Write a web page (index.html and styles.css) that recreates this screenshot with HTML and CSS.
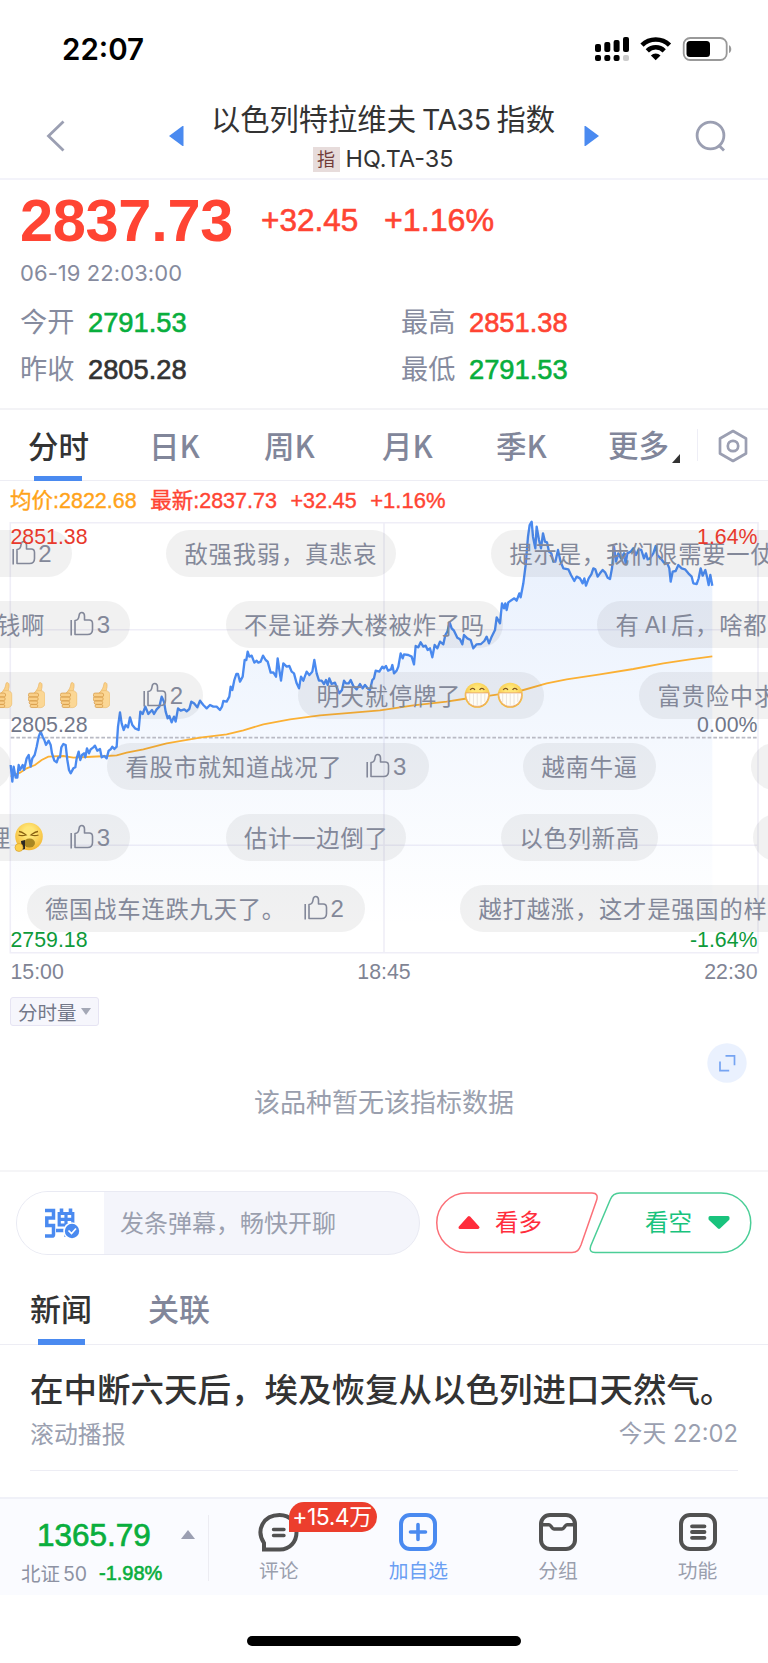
FILE: index.html
```html
<!DOCTYPE html>
<html lang="zh-CN">
<head>
<meta charset="utf-8">
<title>以色列特拉维夫TA35指数</title>
<link rel="stylesheet" href="styles.css">
</head>
<body>
<svg width="0" height="0" class="defs" aria-hidden="true">
  <defs>
    <symbol id="thumb" viewBox="0 0 24 26">
      <path d="M1.2 9v15.5M5 9.5v14h12.500c3 0 5-2 5-5v-6c0-2.200-1.200-3.500-3.300-3.500H14.500V5c0-2-1-3.500-2.700-3.500S9.300 2.600 9.100 4.500C8.800 7.500 7.500 9.500 5 9.500z" fill="none" stroke="currentColor" stroke-width="1.600" stroke-linejoin="round"/>
    </symbol>
    <symbol id="yellow-thumb" viewBox="0 0 18 28">
      <path d="M6.500 12C9 9 11 6 11.200 2.500 11.400.600 14.300.800 14.500 3.500c.2 3-.8 5-1.200 7.500z" fill="#fbd28a" stroke="#e9b25d" stroke-width=".6"/>
      <rect x="6" y="9.500" width="11.500" height="17.500" rx="4.500" fill="#fbd795" stroke="#e9b869" stroke-width=".6"/>
      <path d="M2.500 12h6.500a2 2 0 0 1 0 4H2a2 2 0 0 1 .5-4zM2 16h6.500a2 2 0 0 1 0 4H2a2 2 0 0 1 0-4zM2.500 20h6a1.900 1.900 0 0 1 0 3.700H3a1.900 1.900 0 0 1-.5-3.700zM3.500 23.700h5a1.600 1.600 0 0 1 0 3.200h-4.500a1.600 1.600 0 0 1-.5-3.200z" fill="#f9cf88" stroke="#d99e4c" stroke-width=".8"/>
    </symbol>
    <radialGradient id="face" cx=".5" cy=".35" r=".65"><stop offset=".3" stop-color="#ffe676"/><stop offset="1" stop-color="#f3b632"/></radialGradient>
    <symbol id="grin" viewBox="0 0 28 28">
      <circle cx="14" cy="14" r="13.300" fill="url(#face)"/>
      <path d="M6.500 8.500C8 6 10.500 6 11.500 8.500M16.500 8.500c1-2.500 3.500-2.500 5 0" fill="none" stroke="#7d5220" stroke-width="1.300"/>
      <path d="M2 11.500h24c.5 8-4.500 14.300-12 14.300S1.500 19.500 2 11.500z" fill="#fffdf6" stroke="#e8a26d" stroke-width=".9"/>
      <path d="M6 12v9M10 12v12M14 12v13M18 12v12M22 12v9" stroke="#d9d3cc" stroke-width=".6"/>
    </symbol>
    <symbol id="yawn" viewBox="0 0 29 30">
      <circle cx="15" cy="14.500" r="13.800" fill="url(#face)"/>
      <path d="M5 9.500c3 0 5 2 7 3.500-3 1-5 1-7.500 0M24 9.500c-3 0-5 2-7 3.500 3 1 5 1 7.500 0" fill="none" stroke="#8a6212" stroke-width="1.300"/>
      <ellipse cx="15.500" cy="21" rx="5.500" ry="4.500" fill="#a98722"/>
      <path d="M7 19l4-1v9l-3 1z" fill="#2c2823"/>
      <circle cx="5" cy="25.500" r="4" fill="#fdd04d" stroke="#d39a23" stroke-width=".6"/>
    </symbol>
  </defs>
</svg>

<header class="status">
  <span class="clock">22:07</span>
  <svg class="status-icons" width="138" height="28" viewBox="594 35 138 28">
    <g fill="#000">
      <rect x="595" y="44" width="6" height="8" rx="2"/><rect x="604.300" y="42" width="6" height="10" rx="2"/><rect x="613.600" y="40" width="6" height="12" rx="2"/><rect x="623" y="37" width="6" height="15" rx="2"/>
      <rect x="595" y="55" width="6" height="6" rx="2"/><rect x="604.300" y="55" width="6" height="6" rx="2"/><rect x="613.600" y="55" width="6" height="6" rx="2"/>
    </g>
    <rect x="623" y="55" width="6" height="6" rx="2" fill="#ccc"/>
    <path d="M642 45.200a19.500 19.500 0 0 1 27.500 0M647.300 50.800a12 12 0 0 1 16.900 0" fill="none" stroke="#000" stroke-width="4.600"/>
    <path d="M655.700 60.300l-4.800-4.900a6.800 6.800 0 0 1 9.600 0z"/>
    <rect x="683.700" y="38" width="43" height="22" rx="6.500" fill="none" stroke="#999" stroke-width="1.800"/>
    <rect x="686.500" y="41" width="23.500" height="16" rx="3.500"/>
    <path d="M729 45.200c3 1 3 6.800 0 7.800z" fill="#999"/>
  </svg>
</header>

<nav class="nav">
  <svg class="nav-back" width="20" height="32" viewBox="0 0 20 32"><path d="M17.500 1.500L2.500 16l15 14.500" fill="none" stroke="#9b9fb2" stroke-width="2.800"/></svg>
  <svg class="nav-prev" width="15" height="20" viewBox="0 0 15 20"><path d="M0 10L13.500 0h1v20h-1z" fill="#4a8af0"/></svg>
  <div class="nav-title">
    <h1>以色列特拉维夫<span class="lat">TA35</span>指数</h1>
    <p><b class="tag">指</b><span class="code">HQ.TA-35</span></p>
  </div>
  <svg class="nav-next" width="15" height="20" viewBox="0 0 15 20"><path d="M15 10L1.500 0H.500v20h1z" fill="#4a8af0"/></svg>
  <svg class="nav-search" width="32" height="32" viewBox="0 0 32 32"><g fill="none" stroke="#9b9fb2" stroke-width="2.800"><circle cx="15.500" cy="15.500" r="13.400"/><path d="M23.500 25l5.500 5.500"/></g></svg>
</nav>

<section class="quote">
  <div class="price-row"><strong class="price">2837.73</strong><span class="chg">+32.45</span><span class="pct">+1.16%</span></div>
  <time class="stamp">06-19 22:03:00</time>
  <dl class="stats">
    <div><dt>今开</dt><dd class="green">2791.53</dd></div>
    <div><dt>最高</dt><dd class="red">2851.38</dd></div>
    <div><dt>昨收</dt><dd>2805.28</dd></div>
    <div><dt>最低</dt><dd class="green">2791.53</dd></div>
  </dl>
</section>

<div class="tabs">
  <span class="tab active">分时</span>
  <span class="tab">日K</span>
  <span class="tab">周K</span>
  <span class="tab">月K</span>
  <span class="tab">季K</span>
  <span class="tab more">更多<i></i></span>
  <svg class="gear" width="32" height="34" viewBox="0 0 32 34"><g fill="none" stroke="#9b9fb2" stroke-width="2.700" stroke-linejoin="round"><path d="M16 2l13 7.500v15L16 32 3 24.500v-15z"/><circle cx="16" cy="17" r="5.200"/></g></svg>
</div>

<div class="legend"><span class="orange">均价:2822.68</span><span>最新:2837.73</span><span>+32.45</span><span class="wide">+1.16%</span></div>

<section class="chart">
  <svg width="768" height="485" viewBox="0 510 768 485">
    <defs><linearGradient id="fill" gradientUnits="userSpaceOnUse" x1="0" y1="30" x2="0" y2="1250"><stop offset="0" stop-color="#4a8af0" stop-opacity=".13"/><stop offset="1" stop-color="#4a8af0" stop-opacity="0"/></linearGradient></defs>
    <g fill="none" stroke="#efeef7" stroke-width="1.600">
      <path d="M10.300 522.700H758V952.700H10.300zM10.300 629.700H758M10.300 845.300H758M384 522.700V952.700"/>
    </g>
    <g transform="translate(0 510) scale(.33333)">
      <path id="area" fill="url(#fill)"/>
      <path d="M32 683H2274" stroke="#b9bac4" stroke-width="5" stroke-dasharray="11 6" fill="none"/>
      <polyline id="average" points="32,800 60,788 80,775 105,765 125,750 145,740 190,738 220,743 260,741 320,738 350,736 380,728 430,718 500,700 570,688 600,683 680,673 730,661 790,643 870,628 960,616 1060,608 1140,601 1240,586 1340,575 1390,567 1470,557 1560,543 1640,520 1700,508 1800,493 1900,477 1990,460 2070,448 2137,439" fill="none" stroke="#fbb034" stroke-width="5.500"/>
      <polyline id="price" fill="none" stroke="#4a8af0" stroke-width="7" stroke-linejoin="round"/>
    </g>
  </svg>
  <div class="danmaku" id="danmaku"></div>
  <svg class="labels" width="768" height="485" viewBox="0 510 768 485">
    <g font-size="21.300">
      <text x="10.500" y="543.700" fill="#e8392c">2851.38</text>
      <text x="757.500" y="543.700" fill="#e8392c" text-anchor="end">1.64%</text>
      <text x="10.500" y="732" fill="#717789">2805.28</text>
      <text x="757.500" y="732" fill="#717789" text-anchor="end">0.00%</text>
      <text x="10.500" y="947.300" fill="#0d9a3a">2759.18</text>
      <text x="757.500" y="947.300" fill="#0d9a3a" text-anchor="end">-1.64%</text>
      <g fill="#7f8494"><text x="10.500" y="978.700">15:00</text><text x="384" y="978.700" text-anchor="middle">18:45</text><text x="757.500" y="978.700" text-anchor="end">22:30</text></g>
    </g>
  </svg>
</section>

<section class="volume">
  <button class="vol-btn">分时量<i></i></button>
  <svg class="expand" width="40" height="40" viewBox="0 0 40 40"><circle cx="20" cy="20" r="19.700" fill="#eaf1fe"/><path d="M18.500 12.800h9v9.500M13 18.500v9.200h9.200" fill="none" stroke="#76a4f2" stroke-width="1.700"/></svg>
  <p class="empty">该品种暂无该指标数据</p>
</section>

<section class="compose">
  <div class="input">
    <div class="dan">
      <svg width="38" height="34" viewBox="43 1206 38 34">
        <g fill="none" stroke="#4a8af0" stroke-width="3.500">
          <path d="M45 1210.500h8.500v7.500h-6.700v7.500H53.500v9c0 1-.5 1.600-1.500 1.600h-7"/>
          <path d="M59.200 1213.500h13.600v11.500h-13.600zM59 1219.300h14M66 1213v24" stroke-width="3.200"/>
          <path d="M56 1230.500H67" stroke-width="3.400"/><path d="M61.500 1208.500v4M70.500 1208.500v4" stroke-width="3.600"/>
        </g>
        <circle cx="72" cy="1231" r="8.800" fill="#fff"/><circle cx="72" cy="1231" r="7.200" fill="#4a8af0"/>
        <path d="M68.500 1230.500l3 3 4.500-5" fill="none" stroke="#fff" stroke-width="1.700"/>
      </svg>
    </div>
    <span>发条弹幕，畅快开聊</span>
  </div>
  <div class="vote">
    <svg width="316" height="64" viewBox="0 0 316 64" fill="none" stroke-width="1.500">
      <path d="M30.500 2H156c5 0 6 3 4.500 7.500L145 54c-2 5-4 7.500-9 7.500H30.500a29.750 29.750 0 0 1 0-59.500z" stroke="#fb7078"/>
      <path d="M285 2H184c-5 0-8 2-9.700 6.500L154.700 55c-1.500 4.500 0 6.500 4.500 6.500H285a29.750 29.750 0 0 0 0-59.500z" stroke="#4bce97"/>
    </svg>
    <div class="bull"><svg width="24" height="16" viewBox="0 0 24 16"><path d="M12 2.500L21 12.500H3z" fill="#ff2d3c" stroke="#ff2d3c" stroke-width="3" stroke-linejoin="round"/></svg><span>看多</span></div>
    <div class="bear"><span>看空</span><svg width="24" height="16" viewBox="0 0 24 16"><path d="M3 2.500h18v1.500L12 12.500 3 4z" fill="#19c37d" stroke="#19c37d" stroke-width="3" stroke-linejoin="round"/></svg></div>
  </div>
</section>

<div class="news-tabs"><span class="active">新闻</span><span>关联</span></div>
<article class="news">
  <h2>在中断六天后，埃及恢复从以色列进口天然气。</h2>
  <p><span>滚动播报</span><time>今天 22:02</time></p>
</article>

<footer class="dock">
  <div class="index">
    <div class="idx-top"><strong>1365.79</strong><i></i></div>
    <div class="idx-sub"><span>北证<span class="lat50">50</span></span><b>-1.98%</b></div>
  </div>
  <div class="dock-item">
    <svg width="42" height="42" viewBox="0 0 42 42"><path d="M6 38.500V32C-2.500 19 5.500 4 21.500 4 33 4 38.500 12.500 38.500 21.500S32 38.500 22 38.500z" fill="none" stroke="#515151" stroke-width="4"/><path d="M15.500 18.500h10.500M15.500 24.500h10.500" stroke="#515151" stroke-width="3.400" stroke-linecap="round"/></svg>
    <span>评论</span><em>+15.4万</em>
  </div>
  <div class="dock-item on">
    <svg width="42" height="42" viewBox="0 0 42 42"><rect x="4" y="4" width="34" height="34" rx="9" fill="none" stroke="#4a8af0" stroke-width="4"/><path d="M21 13.500v15M13.500 21h15" stroke="#4a8af0" stroke-width="3.600" stroke-linecap="round"/></svg>
    <span>加自选</span>
  </div>
  <div class="dock-item">
    <svg width="42" height="42" viewBox="0 0 42 42"><g fill="none" stroke="#515151" stroke-width="4"><rect x="4" y="4" width="34" height="34" rx="9"/><path d="M4 13.800h8c2 0 3 4.200 5 4.200h8c2 0 3-4.200 5-4.200h8" stroke-width="3.400"/></g></svg>
    <span>分组</span>
  </div>
  <div class="dock-item">
    <svg width="42" height="42" viewBox="0 0 42 42"><rect x="4" y="4" width="34" height="34" rx="9" fill="none" stroke="#515151" stroke-width="4"/><path d="M15 15.300h12.500M15 21h12.500M15 26.800h12.500" stroke="#515151" stroke-width="3.800" stroke-linecap="round"/></svg>
    <span>功能</span>
  </div>
</footer>
<div class="home"></div>
<script src="app.js"></script>
</body>
</html>
```
FILE: styles.css
```css
* { box-sizing: border-box; margin: 0; padding: 0; }
body {
  width: 768px; height: 1663px; overflow: hidden; background: #fff; color: #333;
  font-family: "Liberation Sans", "Noto Sans CJK SC", sans-serif;
}
svg { display: block; flex: none; }
.defs { position: absolute; }
i, em { font-style: normal; }

.status { height: 98px; padding: 35px 36px 0 62px; display: flex; justify-content: space-between; }
.clock { font: 600 29.500px/28px Inter, sans-serif; color: #000; }

.nav { height: 82px; padding: 0 41px 0 46px; display: flex; border-bottom: 2px solid #f3f3fa; }
.nav-back { margin: 22px 103px 0 0; }
.nav-prev { margin-top: 28px; }
.nav-title { flex: 1; display: flex; flex-direction: column; align-items: center; padding-right: 2px; }
.nav-title h1 { font: 400 29.300px/40px "Noto Sans CJK SC", sans-serif; white-space: nowrap; margin-top: -1px; }
.nav-title .lat { font-family: Inter, sans-serif; font-size: 28.500px; letter-spacing: -.5px; margin: 0 6px; }
.nav-title p { display: flex; align-items: center; height: 26px; margin-top: 6px; }
.tag { width: 27px; height: 25px; background: #e7dcdb; color: #723b38; font: 400 18px/23px "Noto Sans CJK SC", sans-serif; text-align: center; margin-right: 6px; }
.code { font: 400 23.400px/25px Inter, sans-serif; height: 26px; }
.nav-next { margin-top: 28px; }
.nav-search { margin: 22px 0 0 96px; }

.quote { height: 230px; padding: 13px 20px 0; border-bottom: 2px solid #f3f3f6; }
.price-row { display: flex; align-items: center; height: 56px; color: #ff4433; white-space: nowrap; }
.price { font-size: 59.500px; line-height: 56px; width: 241px; letter-spacing: -.3px; }
.chg, .pct { font-size: 31.500px; line-height: 38px; height: 40px; -webkit-text-stroke: .6px; }
.chg { width: 123px; }
.pct { font-size: 32.200px; }
.stamp { display: block; font: 400 22px/24px Inter, sans-serif; letter-spacing: .07px; color: #868b9e; margin-top: 12px; }
.stats { display: grid; grid-template-columns: 381px 1fr; grid-auto-rows: 47px; margin-top: 14px; }
.stats > div { display: flex; align-items: center; }
.stats dt { font-size: 27.200px; line-height: 40px; height: 40px; color: #868b9e; width: 68px; white-space: nowrap; }
.stats dd { font-size: 27.300px; -webkit-text-stroke: .6px; }
.green { color: #09ae3d; }
.red { color: #ff4433; }

.tabs { height: 71px; display: flex; align-items: center; padding-left: 28px; color: #81869a; font-size: 30.500px; font-weight: 500; border-bottom: 1px solid #ededf4; font-family: "Noto Sans CJK SC", sans-serif; white-space: nowrap; }
.tab { position: relative; height: 71px; line-height: 70px; width: 118px; }
.tab:first-child { width: 121px; }
.tab:nth-child(2) { width: 115px; }
.tab:nth-child(3) { width: 118px; }
.tab:nth-child(4) { width: 114px; }
.tab:nth-child(5) { width: 112px; }
.active { color: #333; }
.tab.active::after { content: ""; position: absolute; left: 6px; bottom: 0; width: 48px; height: 5px; background: #4a8af0; }
.tab.more { width: 90px; height: 32px; line-height: 31px; border-right: 1.500px solid #eeeef6; }
.more i { position: absolute; left: 64px; bottom: -2px; border: solid transparent; border-width: 9px 0 0 8px; border-bottom: 9px solid #333; border-top: 0; }
.gear { margin-left: 19px; margin-top: 1px; }

.legend { height: 29px; padding-left: 10px; display: flex; gap: 13.500px; font-size: 21.500px; line-height: 41px; color: #ff4433; -webkit-text-stroke: .4px; white-space: nowrap; }
.legend .wide { font-size: 22px; line-height: 40px; }
.orange { color: #ffa31a; }

.chart { position: relative; height: 485px; overflow: hidden; }
.labels { position: absolute; left: 0; top: 0; }
.pill { position: absolute; height: 47px; border-radius: 24px; background: rgba(60, 60, 60, .07); color: #838899; display: flex; align-items: center; padding-left: 18.500px; white-space: nowrap; font: 400 23.300px/47px "Noto Sans CJK SC", sans-serif; letter-spacing: .8px; }
.pill.end { justify-content: flex-end; padding: 0 20px 0 0; }
.pill .like { display: flex; align-items: center; letter-spacing: 0; font-family: "Liberation Sans", sans-serif; font-size: 24px; }
.pill .like svg { margin: -1px 2.500px 0 0; }
.pill .latin { font-family: Inter, sans-serif; letter-spacing: 0; margin: 0 4px 0 5px; }
.emo { margin: 0 3px; }
.emo.yawn { margin-right: 0; }
.emo.hand { margin: 0 15px 0 0; }

.volume { position: relative; height: 177px; border-bottom: 2px solid #f5f5f7; padding: 2px 10px 0; display: flex; flex-direction: column; align-items: flex-start; }
.vol-btn { width: 89px; height: 29px; background: #f6f6fc; border: 1.500px solid #e6e4f3; border-radius: 3px; font: 400 19.500px/26px "Noto Sans CJK SC", sans-serif; color: #737889; display: flex; align-items: center; padding-left: 7px; white-space: nowrap; }
.vol-btn i { margin-left: 4px; border: 5px solid transparent; border-top: 7px solid #a4a8b6; border-bottom: 0; }
.expand { margin: 17px 11.500px 0 0; align-self: flex-end; }
.empty { align-self: center; font: 400 26px/36px "Noto Sans CJK SC", sans-serif; color: #9a9fae; }

.compose { height: 83px; display: flex; padding: 19px 0 0 16px; }
.input { width: 404px; height: 64px; border: 1.500px solid #e9eaf3; border-radius: 32px; background: #f4f5fb; overflow: hidden; display: flex; align-items: center; font: 400 24px/60px "Noto Sans CJK SC", sans-serif; color: #9a9fae; }
.input > span { height: 62px; }
.dan { width: 87px; height: 64px; background: #fff; padding: 15px 0 0 26px; margin-right: 16px; }
.vote { position: relative; margin-left: 16px; width: 316px; height: 64px; }
.bull, .bear { position: absolute; top: 0; display: flex; align-items: center; height: 63px; font-size: 23.500px; }
.bull span, .bear span { line-height: 36px; height: 36px; }
.bull { left: 21px; color: #ff2d3c; gap: 14px; }
.bear { left: 209px; color: #19c37d; gap: 15px; }

.news-tabs { height: 90px; border-bottom: 1.500px solid #ededf4; padding-left: 30px; display: flex; gap: 56px; font: 500 31px/106px "Noto Sans CJK SC", sans-serif; color: #81869a; white-space: nowrap; }
.news-tabs span { position: relative; height: 90px; }
.news-tabs .active::after { content: ""; position: absolute; left: 8px; bottom: 0; width: 47px; height: 6px; background: #4a8af0; }
.news { margin: 0 30px; height: 126px; padding-top: 19px; border-bottom: 1.500px solid #ededf4; }
.news h2 { font: 500 33.500px/48px "Noto Sans CJK SC", sans-serif; white-space: nowrap; }
.news p { display: flex; justify-content: space-between; font: 400 23.900px/36px "Noto Sans CJK SC", sans-serif; color: #9a9fb0; margin-top: 3px; }
.news time { font-family: Inter, "Noto Sans CJK SC", sans-serif; font-size: 23.700px; line-height: 38px; }

.dock { margin-top: 26px; height: 98px; border-top: 2px solid #f0f1f8; background: #fafbff; display: flex; }
.index { width: 209px; height: 66px; margin-top: 16px; border-right: 1.500px solid #ececf2; }
.idx-top { display: flex; align-items: center; padding-left: 37px; height: 40px; }
.idx-top strong { font-weight: 400; font-size: 31.500px; -webkit-text-stroke: .7px; color: #09ae3d; width: 144px; }
.idx-top i { border: 7px solid transparent; border-top: 0; border-bottom: 9px solid #9b9fb2; margin-top: -2px; }
.idx-sub { display: flex; padding-left: 21px; font-size: 19.500px; line-height: 36px; color: #8d92a3; white-space: nowrap; }
.idx-sub > span { width: 78px; font-family: "Noto Sans CJK SC", sans-serif; }
.lat50 { font-family: Inter, sans-serif; margin-left: 3px; font-size: 19.500px; }
.idx-sub b { color: #09ae3d; font-size: 20px; font-weight: 400; -webkit-text-stroke: .6px; line-height: 37px; }
.dock-item { position: relative; width: 139.600px; display: flex; flex-direction: column; align-items: center; padding-top: 12px; color: #9a9fae; font: 400 19.800px/34px "Noto Sans CJK SC", sans-serif; }
.dock-item.on { color: #6b9ff3; }
.dock-item em { position: absolute; left: 80px; top: 3px; width: 88px; height: 30px; border-radius: 15px 15px 15px 0; background: #ec3e2d; color: #fff; font: 400 23px/30px Inter, "Noto Sans CJK SC", sans-serif; text-align: center; white-space: nowrap; letter-spacing: -.5px; text-indent: -2px; z-index: 1; }
.home { width: 274px; height: 10px; border-radius: 5px; background: #000; margin: 41px auto 0; }
```
FILE: app.js
```js
const pricePoints = "32,765 37,815 41,770 47,803 52,803 56,765 60,780 68,765 72,780 80,745 86,735 92,770 97,745 104,735 110,710 116,680 122,665 128,680 133,690 138,705 146,692 152,705 156,730 163,752 170,757 175,742 180,742 184,712 190,702 197,705 202,750 207,780 212,790 220,775 226,772 230,745 236,725 241,750 246,735 252,730 256,742 261,715 267,730 272,718 280,712 285,707 292,722 300,717 305,742 313,738 320,745 326,722 332,718 337,710 343,717 350,710 354,650 360,607 365,640 371,660 377,645 384,652 390,622 397,645 405,655 416,660 421,605 428,612 436,590 445,612 456,600 462,612 470,598 478,590 485,560 492,575 497,605 503,625 508,618 515,637 522,620 527,635 534,595 542,602 553,598 560,604 568,597 574,575 582,580 592,592 600,572 610,585 620,595 630,585 640,590 650,590 660,600 666,590 670,573 680,575 688,560 692,530 697,540 703,510 709,492 714,492 720,515 728,500 734,450 739,450 743,425 748,440 755,437 763,458 770,452 775,458 782,455 789,437 797,450 803,455 812,488 820,487 828,500 833,445 838,480 843,512 850,460 860,470 868,468 875,485 882,490 890,520 897,535 903,500 910,512 920,485 928,495 937,485 943,450 950,490 957,512 965,512 972,522 978,510 983,525 988,505 995,522 1005,518 1010,532 1018,550 1026,540 1032,512 1038,520 1046,520 1052,510 1060,528 1070,538 1080,522 1088,535 1095,525 1105,537 1110,540 1117,510 1122,505 1127,482 1138,485 1147,470 1152,475 1158,468 1164,482 1173,478 1177,465 1182,490 1190,482 1195,470 1202,430 1208,445 1212,433 1225,435 1235,440 1242,463 1247,408 1255,412 1262,397 1270,410 1277,407 1283,420 1290,415 1297,442 1304,405 1312,415 1320,395 1330,403 1336,375 1342,365 1349,337 1355,355 1362,362 1372,383 1380,388 1387,403 1392,375 1402,385 1412,390 1420,415 1430,403 1443,402 1453,393 1460,380 1467,400 1475,380 1485,360 1490,322 1500,340 1506,280 1512,295 1516,280 1520,300 1525,277 1535,270 1543,265 1550,272 1558,250 1562,262 1570,220 1577,165 1584,80 1589,45 1595,35 1599,80 1606,115 1610,50 1617,90 1623,115 1629,70 1635,95 1641,97 1647,125 1654,130 1660,155 1666,155 1674,120 1682,155 1690,175 1705,178 1713,195 1723,213 1730,200 1740,205 1748,220 1753,205 1758,227 1766,205 1774,193 1780,175 1786,178 1793,200 1800,190 1808,180 1816,188 1823,203 1830,207 1836,175 1842,110 1848,155 1855,130 1863,145 1872,130 1877,160 1882,130 1892,125 1900,115 1908,135 1916,118 1924,120 1932,145 1938,130 1943,148 1950,145 1960,130 1967,108 1972,135 1982,145 1992,158 2002,160 2008,175 2012,215 2018,185 2027,183 2035,165 2045,175 2055,178 2065,190 2075,200 2080,220 2090,222 2096,205 2102,175 2108,197 2116,180 2121,200 2126,225 2131,195 2137,227";
document.getElementById("price").setAttribute("points", pricePoints);
document.getElementById("area").setAttribute("d", "M" + pricePoints.split(" ").join("L") + "L2137,1328L32,1328Z");

const icon = (name, w, h, cls) => `<svg class="${cls || ""}" width="${w}" height="${h}"><use href="#${name}"/></svg>`;
const hand = icon("yellow-thumb", 17.5, 28, "emo hand");
const grin = icon("grin", 26.500, 26.500, "emo");
const like = (n, gap) => `<span class="like" style="margin-left:${gap}px">${icon("thumb", 24, 26)}${n}</span>`;

// row, left, width, content, anchored to the right edge
const pills = [
  [0, -120, 191.5, like(2, 0), true],
  [0, 166, 230, "敌强我弱，真悲哀"],
  [0, 491, 340, "提示是，我们限需要一仗"],
  [1, -120, 250, "钱啊" + like(3, 25), true],
  [1, 225.5, 277, "不是证券大楼被炸了吗"],
  [1, 597, 300, '有<span class="latin">AI</span>后，啥都不'],
  [2, -120, 323, hand + hand + hand + hand + like(2, 18), true],
  [2, 298, 246, "明天就停牌了" + grin + grin],
  [2, 639, 200, "富贵险中求"],
  [3, -120, 131, ""],
  [3, 107, 321.5, "看股市就知道战况了" + like(3, 24)],
  [3, 523, 133, "越南牛逼"],
  [3, 751, 100, ""],
  [4, -120, 250, "理" + icon("yawn", 29, 30, "emo yawn") + like(3, 27), true],
  [4, 225.5, 180.5, "估计一边倒了"],
  [4, 501, 157, "以色列新高"],
  [4, 753, 100, ""],
  [5, 26.5, 338.5, "德国战车连跌九天了。" + like(2, 18)],
  [5, 460, 400, "越打越涨，这才是强国的样"]
];
document.getElementById("danmaku").innerHTML = pills.map(([row, x, w, html, end]) =>
  `<div class="pill${end ? " end" : ""}" style="left:${x}px;top:${20 + row * 70.9}px;width:${w}px">${html}</div>`).join("");
```
